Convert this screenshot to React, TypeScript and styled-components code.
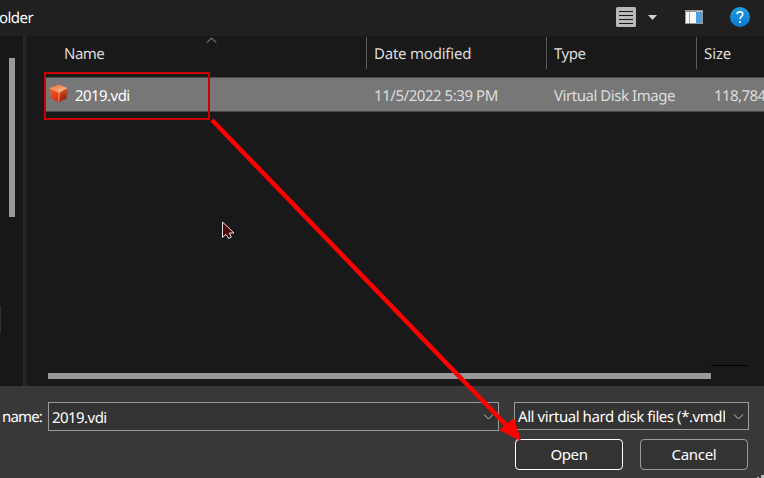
import React from "react";
import styled, { createGlobalStyle } from "styled-components";

const GlobalStyle = createGlobalStyle`
  * { box-sizing: border-box; }
  body { margin: 0; background: #191919; overflow: hidden; }
`;

const Dialog = styled.div`
  position: relative;
  display: flex;
  flex-direction: column;
  width: 764px;
  height: 478px;
  overflow: hidden;
  background: #191919;
  color: #fff;
  font: 15px/20px "Noto Sans", "Open Sans", sans-serif;
  text-rendering: geometricPrecision;
`;

const Label = styled.span<{ $spacing?: number; $color?: string }>`
  display: block;
  padding-top: 2px;
  white-space: pre;
  letter-spacing: ${(p) => p.$spacing ?? 0}px;
  color: ${(p) => p.$color ?? "inherit"};
`;

const Toolbar = styled.header`
  display: flex;
  align-items: center;
  flex: 0 0 36px;
  padding: 0 14px 2px 0;
  background: #202020;
  svg { display: block; flex: none; }
`;

const FolderLabel = styled(Label)`
  margin: 0 auto 0 -1px;
`;

const ToolIcon = styled.div<{ $gap: number }>`
  margin-right: ${(p) => p.$gap}px;
`;

const Main = styled.main`
  display: flex;
  flex: 0 0 350px;
`;

const Sidebar = styled.aside`
  display: flex;
  flex-direction: column;
  justify-content: space-between;
  width: 23px;
  padding-top: 22px;
  background: #171717;
`;

const VerticalThumb = styled.div`
  width: 6px;
  height: 159px;
  margin-left: 9px;
  background: #999;
`;

const TreeEdge = styled.div`
  width: 1px;
  height: 27px;
  margin-bottom: 53px;
  background: #303030;
`;

const Splitter = styled.div`
  width: 4px;
  background: #202020;
  border-left: 2px solid #292929;
`;

const FileList = styled.section`
  display: flex;
  flex-direction: column;
  flex: 1;
  min-width: 0;
  overflow: hidden;
`;

const columns = "320px 180px 150px 87px";

const HeaderRow = styled.div`
  display: grid;
  grid-template-columns: ${columns};
  height: 33px;
  margin: 1px 0 7px 20px;
`;

const HeaderCell = styled.div`
  display: flex;
  align-items: center;
  padding: 0 7px 0 17px;
  border-right: 1px solid #5c5c5c;
  height: 32px;
  & + & { padding-left: 7px; }
  &:last-child { border-right: 0; }
`;

const SortMark = styled.svg`
  align-self: flex-start;
  margin: 0 0 0 102px;
`;

const FileRow = styled.div`
  display: grid;
  grid-template-columns: ${columns};
  align-items: center;
  flex: 0 0 35px;
  margin-left: 19px;
  padding: 1px 0 0 1px;
  background: #777;
  border-top: 1px solid #494949;
  border-bottom: 1px solid #494949;
`;

const Cell = styled.div`
  padding-left: 7px;
`;

const NameCell = styled.div`
  display: flex;
  align-items: center;
  gap: 6px;
  padding-left: 2px;
  svg { margin-top: -3px; }
`;

const SizeCell = styled.div`
  padding-left: 17px;
`;

const ScrollArea = styled.div`
  display: flex;
  align-items: flex-start;
  height: 22px;
  margin: auto 0 0 21px;
`;

const HorizontalThumb = styled.div`
  width: 663px;
  height: 6px;
  margin-top: 9px;
  background: #999;
`;

const ScrollCorner = styled.div`
  width: 37px;
  height: 1px;
  margin-top: 1px;
  background: #000;
`;

const Footer = styled.footer`
  flex: 0 0 92px;
  background: #383838;
  padding-top: 16px;
`;

const Fields = styled.div`
  display: flex;
  align-items: flex-start;
`;

const NameLabel = styled.div`
  width: 48px;
  padding: 3px 0 0 2px;
`;

const ComboBox = styled.div<{ $width: number; $height: number }>`
  display: flex;
  align-items: center;
  width: ${(p) => p.$width}px;
  height: ${(p) => p.$height}px;
  padding: 0 4px 0 3px;
  border: 1px solid #9b9b9b;
  background: #333;
  & + & { margin-left: 15px; }
  svg { flex: none; margin: 1px 0 0 auto; }
`;

const ClippedValue = styled.div`
  width: 207px;
  overflow: hidden;
`;

const Actions = styled.div`
  display: flex;
  gap: 17px;
  padding: 8px 0 0 515px;
`;

const Button = styled.button<{ $primary?: boolean }>`
  display: flex;
  align-items: center;
  justify-content: center;
  width: 108px;
  height: 31px;
  padding: 0 0 3px;
  color: #fff;
  font: inherit;
  background: #333;
  border: 1px solid ${(p) => (p.$primary ? "#fff" : "#9b9b9b")};
  border-radius: 4px;
`;

const Annotation = styled.svg`
  position: absolute;
  inset: 0;
  pointer-events: none;
`;

const Chevron = () => (
  <svg width="11" height="8" viewBox="0 0 11 8" fill="none" stroke="#c4c4c4">
    <path d="M1 1.5 5.5 6 10 1.5" />
  </svg>
);

const CubeIcon = () => (
  <svg width="20" height="20" viewBox="0 0 20 20">
    <defs>
      <linearGradient id="cubeTop" x2="1" y2="1">
        <stop stopColor="#f0642c" />
        <stop offset="1" stopColor="#ffc898" />
      </linearGradient>
      <linearGradient id="cubeLeft" x2="0.5" y2="1">
        <stop stopColor="#f8622c" />
        <stop offset="1" stopColor="#e62a06" />
      </linearGradient>
      <linearGradient id="cubeRight" x2="0.4" y2="1">
        <stop stopColor="#ee5a25" />
        <stop offset="1" stopColor="#a01804" />
      </linearGradient>
    </defs>
    <path d="m9.500 19 8-4 2-8-4.500 9z" fill="#4a342e" opacity=".5" />
    <path d="m1 4 8.500-3.500L18 4l-7.500 4z" fill="url(#cubeTop)" />
    <path d="m1 4 9 4.500-.5 10L2 14z" fill="url(#cubeLeft)" />
    <path d="m10 8.500 8-4.500-.8 10-7.700 4.500z" fill="url(#cubeRight)" />
    <path d="m1 4 9 4.500L18 4M10 8.500l-.3 9" fill="none" stroke="#ffbd92" strokeWidth=".8" />
  </svg>
);

export default function App() {
  return (
    <>
      <GlobalStyle />
      <Dialog>
        <Toolbar>
          <FolderLabel $spacing={-0.55}>older</FolderLabel>
          <ToolIcon $gap={12}>
            <svg width="20" height="20">
              <rect width="20" height="20" rx="1.5" fill="#b8b8b8" />
              <path d="M3 4.5h14M3 8.5h14M3 12.5h14M3 16.5h14" stroke="#171717" />
            </svg>
          </ToolIcon>
          <ToolIcon $gap={28}>
            <svg width="9" height="5"><path d="M0 0h9L4.5 5z" fill="#d0d0d0" /></svg>
          </ToolIcon>
          <ToolIcon $gap={27}>
            <svg width="18" height="14">
              <path d="M0 0h18v14H0z" fill="#969696" />
              <path d="M1 2h10v11H1z" fill="#fafafa" />
              <path d="M4.5 2v11" stroke="#aaa" />
              <path d="M11 2h6v11h-6z" fill="#46a0e4" />
              <path d="M12 1h1v1h-1zM14 1h1v1h-1zM16 1h1v1h-1z" fill="#eee" />
            </svg>
          </ToolIcon>
          <svg width="20" height="20">
            <defs><linearGradient id="help" x2="0" y2="1"><stop stopColor="#239cdf" /><stop offset="1" stopColor="#0879d3" /></linearGradient></defs>
            <circle cx="10" cy="10" r="10" fill="url(#help)" />
            <path d="M7 7.3Q7.1 4.9 10 4.9q2.8 0 2.8 2.3c0 2.3-2.8 2.3-2.8 5" fill="none" stroke="#fff" strokeWidth="1.6" />
            <circle cx="10" cy="15" r="1.1" fill="#fff" />
          </svg>
        </Toolbar>
        <Main>
          <Sidebar><VerticalThumb /><TreeEdge /></Sidebar>
          <Splitter />
          <FileList>
            <HeaderRow>
              <HeaderCell>
                <Label $color="#dedede" $spacing={-0.5}>Name</Label>
                <SortMark width="11" height="7"><path d="M1 5.500 5.500 1 10 5.500" fill="none" stroke="#aaa" /></SortMark>
              </HeaderCell>
              <HeaderCell><Label $color="#dedede" $spacing={-0.22}>Date modified</Label></HeaderCell>
              <HeaderCell><Label $color="#dedede" $spacing={-0.5}>Type</Label></HeaderCell>
              <HeaderCell><Label $color="#dedede" $spacing={-0.1}>Size</Label></HeaderCell>
            </HeaderRow>
            <FileRow>
              <NameCell><CubeIcon /><Label $spacing={-0.55}>2019.vdi</Label></NameCell>
              <Cell><Label $color="#dedede" $spacing={-0.45}>11/5/2022 5:39 PM</Label></Cell>
              <Cell><Label $color="#dedede" $spacing={-0.45}>Virtual Disk Image</Label></Cell>
              <SizeCell><Label $color="#dedede" $spacing={-0.55}>118,784</Label></SizeCell>
            </FileRow>
            <ScrollArea><HorizontalThumb /><ScrollCorner /></ScrollArea>
          </FileList>
        </Main>
        <Footer>
          <Fields>
            <NameLabel><Label $spacing={-0.85}>name:</Label></NameLabel>
            <ComboBox $width={451} $height={29}><Label $spacing={-0.55}>2019.vdi</Label><Chevron /></ComboBox>
            <ComboBox $width={235} $height={28}><ClippedValue><Label $spacing={-0.43}>All virtual hard disk files (*.vmdk</Label></ClippedValue><Chevron /></ComboBox>
          </Fields>
          <Actions>
            <Button $primary><Label $spacing={-0.4}>Open</Label></Button>
            <Button><Label $spacing={-0.3}>Cancel</Label></Button>
          </Actions>
        </Footer>
        <Annotation width="764" height="478">
          <rect x="45" y="73" width="164" height="46" fill="none" stroke="#cc0000" strokeWidth="2" />
          <path d="M212 120 508 427" stroke="#f00" strokeWidth="4.500" />
          <path d="m521 441-22-11 15-12z" fill="#f00" />
          <path d="M222.5 222v15.5l3.5-3.2 2.7 4.2 2.6-1.3-2-4.2h4.7z" fill="#500609" stroke="#e5dfdf" />
          <path d="M761 475h3v3h-3zM757 477h2v1h-2z" fill="#b8b8b8" />
        </Annotation>
      </Dialog>
    </>
  );
}
